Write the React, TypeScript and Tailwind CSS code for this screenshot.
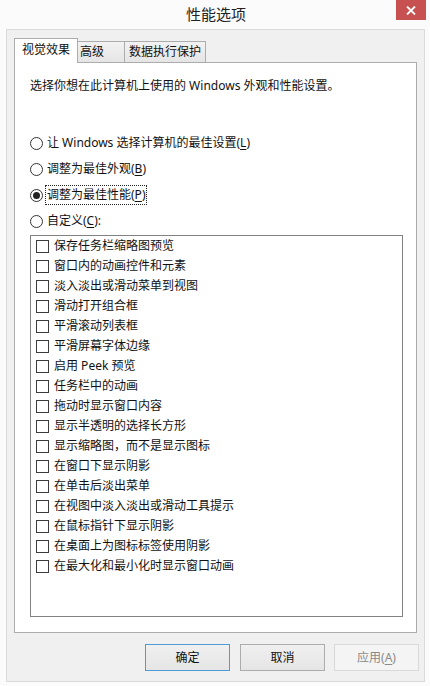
import React from "react";

const FONT = '"Noto Sans", "Noto Sans CJK SC", sans-serif';

function U({ c }: { c: string }) {
  return <span className="underline underline-offset-2">{c}</span>;
}

function Radio({ checked, children, focus }: { checked?: boolean; children: React.ReactNode; focus?: boolean }) {
  return (
    <div className="flex h-[20px] items-center">
      <div className="flex h-[13px] w-[13px] items-center justify-center rounded-full border border-[#333333] bg-white">
        {checked && <div className="h-[7px] w-[7px] rounded-full bg-[#222222]" />}
      </div>
      <div
        className={
          "ml-[2px] flex h-[20px] items-center px-[1px] " +
          (focus ? "border border-dotted border-[#222]" : "border border-transparent")
        }
      >
        {children}
      </div>
    </div>
  );
}

const items = [
  "保存任务栏缩略图预览",
  "窗口内的动画控件和元素",
  "淡入淡出或滑动菜单到视图",
  "滑动打开组合框",
  "平滑滚动列表框",
  "平滑屏幕字体边缘",
  "启用 Peek 预览",
  "任务栏中的动画",
  "拖动时显示窗口内容",
  "显示半透明的选择长方形",
  "显示缩略图，而不是显示图标",
  "在窗口下显示阴影",
  "在单击后淡出菜单",
  "在视图中淡入淡出或滑动工具提示",
  "在鼠标指针下显示阴影",
  "在桌面上为图标标签使用阴影",
  "在最大化和最小化时显示窗口动画",
];

export default function App() {
  return (
    <div
      className="relative h-[686px] w-[430px] overflow-hidden bg-[#fbfbfb] text-[12px] text-[#111]"
      style={{ fontFamily: FONT }}
    >
      {/* Title bar */}
      <div className="relative flex h-[29px] items-center justify-center">
        <span className="text-[15px] leading-none text-[#222] ml-[2px] -mt-[1px]">性能选项</span>
        <div className="absolute right-[4px] top-0 flex h-[20px] w-[30px] items-center justify-center bg-[#c75050]">
          <svg width="10" height="9" viewBox="0 0 10 9">
            <path d="M1 0.5 L9 8.5 M9 0.5 L1 8.5" stroke="white" strokeWidth="1.8" />
          </svg>
        </div>
      </div>

      {/* Client area */}
      <div className="ml-[6px] mr-[5px] flex h-[653px] flex-col border border-[#dadada] bg-[#f0f0f0] pl-[7px] pr-[7px] pt-[8px]">
        {/* Tabs */}
        <div className="relative z-10 -mb-[1px] flex h-[25px] items-end">
          <div className="flex h-[25px] w-[64px] items-start justify-center border border-b-0 border-[#acacac] bg-white pt-[4px] leading-[14px]">
            视觉效果
          </div>
          <div className="flex h-[22px] w-[47px] items-start border border-l-0 border-[#acacac] bg-gradient-to-b from-[#f2f2f2] to-[#e5e5e5] pl-[2px] pt-[3px] leading-[14px]">
            高级
          </div>
          <div className="flex h-[22px] w-[81px] items-start justify-center border border-l-0 border-[#acacac] bg-gradient-to-b from-[#f2f2f2] to-[#e5e5e5] pt-[3px] leading-[14px]">
            数据执行保护
          </div>
        </div>

        {/* Panel */}
        <div className="flex h-[571px] flex-col border border-[#acacac] bg-white pl-[15px] pr-[13px]">
          <div className="mt-[15px] leading-[16px]">选择你想在此计算机上使用的 Windows 外观和性能设置。</div>

          <div className="mt-[39px] flex flex-col gap-[6px]">
            <Radio>
              <span>
                让 Windows 选择计算机的最佳设置(<U c="L" />)
              </span>
            </Radio>
            <Radio>
              <span>
                调整为最佳外观(<U c="B" />)
              </span>
            </Radio>
            <Radio checked focus>
              <span>
                调整为最佳性能(<U c="P" />)
              </span>
            </Radio>
            <Radio>
              <span>
                自定义(<U c="C" />):
              </span>
            </Radio>
          </div>

          {/* List */}
          <div className="mt-[4px] h-[382px] border border-[#828282] bg-white pl-[5px]">
            {items.map((t) => (
              <div key={t} className="flex h-[20px] items-center">
                <div className="h-[13px] w-[13px] border border-[#3c3c3c] bg-white" />
                <span className="ml-[5px] leading-none">{t}</span>
              </div>
            ))}
          </div>
        </div>

        {/* Buttons */}
        <div className="-mr-[2px] mt-[11px] flex justify-end">
          <button className="flex h-[27px] w-[85px] items-center justify-center border border-[#4f9bd6] bg-gradient-to-b from-[#f0f0f0] to-[#e5e5e5] text-[12px] text-[#111]">
            确定
          </button>
          <button className="ml-[10px] flex h-[27px] w-[85px] items-center justify-center border border-[#acacac] bg-gradient-to-b from-[#f0f0f0] to-[#e5e5e5] text-[12px] text-[#111]">
            取消
          </button>
          <button className="ml-[9px] flex h-[27px] w-[85px] items-center justify-center border border-[#d9d9d9] bg-[#f4f4f4] text-[12px] text-[#8a8a8a]">
            应用(<U c="A" />)
          </button>
        </div>
      </div>
    </div>
  );
}
